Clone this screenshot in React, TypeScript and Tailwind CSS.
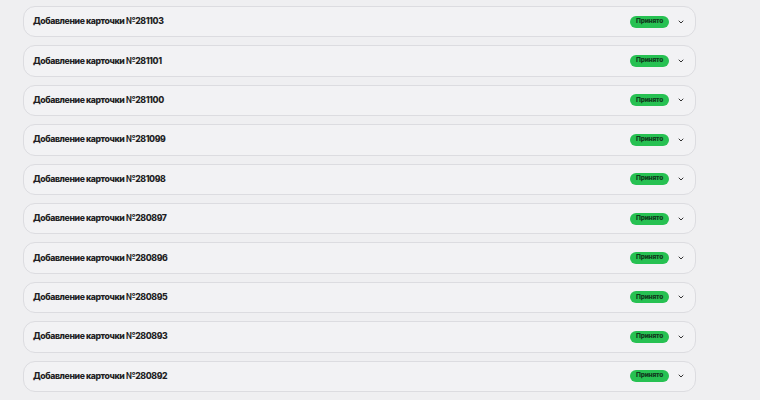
import { ChevronDown } from "lucide-react";

const items = [
  "281103",
  "281101",
  "281100",
  "281099",
  "281098",
  "280897",
  "280896",
  "280895",
  "280893",
  "280892",
];

export default function App() {
  return (
    <div className="h-[400px] overflow-hidden bg-[#efeff1] pl-[23px] pt-[6px] font-['Inter',sans-serif]">
      <div className="flex w-[673px] flex-col gap-[8px]">
        {items.map((id) => (
          <div
            key={id}
            className="flex h-[31.4px] shrink-0 items-center justify-between rounded-[12px] border border-[#dcdce0] bg-[#f2f2f4] pl-[9px] pr-[10px]"
          >
            <span className="text-[8.7px] font-extrabold tracking-[-0.4px] text-[#1f1f24]">
              Добавление карточки №{id}
            </span>
            <div className="flex items-center gap-[8px]">
              <span className="flex h-[12px] w-[39px] items-center justify-center rounded-full bg-[#27c152] text-[6.5px] font-extrabold tracking-[-0.2px] text-[#103a1c]">
                Принято
              </span>
              <ChevronDown className="h-[8px] w-[8px] text-[#333]" strokeWidth={3} />
            </div>
          </div>
        ))}
        <div className="h-[31.4px] shrink-0 rounded-[12px] border border-[#dcdce0] bg-[#f2f2f4]" />
      </div>
    </div>
  );
}
